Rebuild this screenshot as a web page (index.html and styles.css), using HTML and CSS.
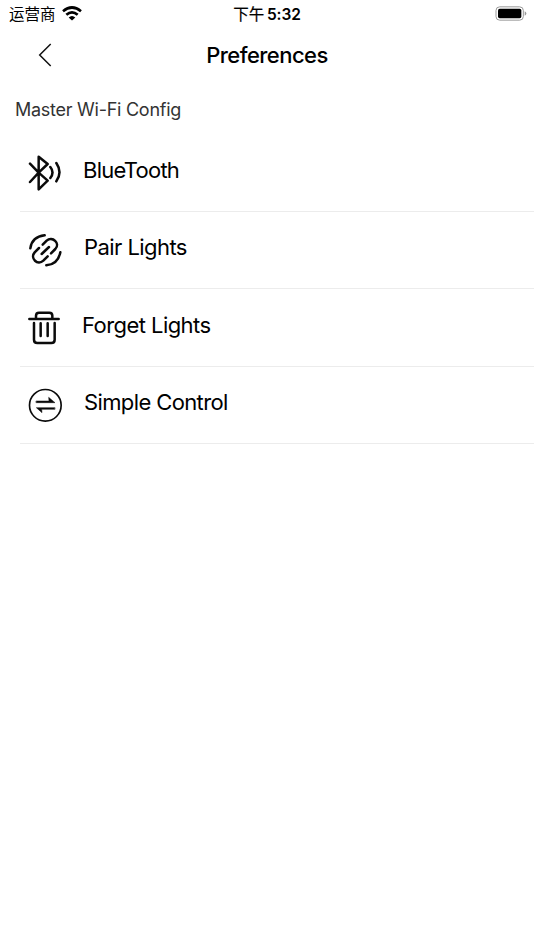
FILE: index.html
```html
<!DOCTYPE html>
<html lang="zh-CN">
<head>
    <meta charset="UTF-8">
    <meta name="viewport" content="width=device-width, initial-scale=1.0">
    <title>Preferences</title>
    <link rel="stylesheet" href="styles.css">
</head>
<body>
    <div class="status-bar">
        <div class="carrier">
            <span>运营商</span>
            <svg class="wifi" viewBox="0 0 60 44">
                <path class="band" d="M3 15 Q30 -7 57 15"/>
                <path class="band" d="M13 26 Q30 11 47 26"/>
                <path d="M20 34 Q30 25 40 34 L30 43 Z"/>
            </svg>
        </div>
        <div class="time"><span class="period">下午</span> 5:32</div>
        <div class="power">
            <svg class="battery" viewBox="0 0 96 44">
                <rect class="case" x="3" y="2" width="82" height="40" rx="11"/>
                <rect x="9" y="8" width="70" height="28" rx="5"/>
                <path class="tip" d="M89 15 Q94 18 94 22 Q94 26 89 29 Z"/>
            </svg>
        </div>
    </div>
    <header class="nav">
        <button class="back" aria-label="Back">
            <svg viewBox="0 0 14 24"><path d="M12.7 1 L1.7 12 L12.7 23"/></svg>
        </button>
        <h1>Preferences</h1>
    </header>
    <h2>Master Wi-Fi Config</h2>
    <ul class="menu">
        <li class="bluetooth">
            <svg class="icon" viewBox="36 46 108 108">
                <path d="M45 72 L71 99 L98 123 L71 149 V51 L98 73 L71 99 L45 127"/>
                <path d="M106 82 Q119 98 106 115 M124 70 Q143 98 124 125"/>
            </svg>
            <span>BlueTooth</span>
        </li>
        <li class="pair">
            <svg class="icon" viewBox="36 36 108 108">
                <path d="M46 85 Q51 50 89 46 M94 136 Q129 133 136 97"/>
                <path d="M83 74 L95 62 C112 47 137 70 121 87 L108 100"/>
                <path d="M72 84 L59 97 C44 115 68 138 85 122 L98 109 M80 102 L102 81"/>
            </svg>
            <span>Pair Lights</span>
        </li>
        <li class="forget">
            <svg class="icon" viewBox="36 36 108 108">
                <path d="M43 63 H131 M63 62 V53 Q63 44 72 44 H103 Q112 44 112 53 V62"/>
                <path d="M57 75 V125 Q57 135 67 135 H109 Q119 135 119 125 V75 M77 76 V114 M98 76 V114"/>
            </svg>
            <span>Forget Lights</span>
        </li>
        <li class="simple">
            <svg class="icon" viewBox="36 36 108 108">
                <circle cx="91" cy="91" r="47.5"/>
                <path class="arrow" d="M64 78 H102 L101 67 L120 83 H64 Z M119 98 H64 L81 113 L80 103 H119 Z"/>
            </svg>
            <span>Simple Control</span>
        </li>
    </ul>
</body>
</html>
```

FILE: styles.css
```css
body {
    font-family: Inter, "Noto Sans CJK SC", sans-serif;
    background: #fff;
    color: #000;
    margin: 0;
}
.status-bar {
    display: grid;
    grid-template-columns: 1fr auto 1fr;
    align-items: center;
    height: 27px;
    padding: 0 7px 0 9px;
    font-size: 15.5px;
    line-height: 29px;
}
.carrier {
    display: flex;
    align-items: center;
    gap: 6px;
}
.wifi {
    width: 20px;
    height: 15px;
    margin-bottom: 2px;
}
.wifi .band {
    fill: none;
    stroke: #000;
    stroke-width: 8;
}
.time {
    margin-right: 2px;
    font-weight: 600;
    font-size: 15.5px;
    letter-spacing: -0.1px;
    word-spacing: -1px;
}
.period {
    font-weight: 400;
    -webkit-text-stroke: 0.2px #000;
}
.power {
    display: flex;
    justify-content: flex-end;
}
.battery {
    width: 32px;
    height: 15px;
    margin-bottom: 2px;
}
.battery .case {
    fill: none;
    stroke: #999;
    stroke-width: 3;
}
.battery .tip {
    fill: #999;
}
.nav {
    display: grid;
    grid-template-columns: 90px 1fr 90px;
    align-items: center;
    height: 56px;
}
.back {
    display: flex;
    padding: 0 0 0 38px;
    border: none;
    background: none;
}
.back svg {
    width: 14px;
    height: 24px;
    fill: none;
    stroke: #111;
    stroke-width: 1.5;
}
h1 {
    margin: 0;
    font-size: 22px;
    font-weight: 500;
    letter-spacing: -0.54px;
    text-align: center;
}
h2 {
    margin: 0;
    padding-left: 15px;
    height: 51px;
    font-size: 18px;
    font-weight: 400;
    line-height: 53px;
    letter-spacing: -0.26px;
    color: #333;
}
.menu {
    list-style: none;
    margin: 0;
    padding: 0.5px 0 0 20px;
}
.menu li {
    display: flex;
    box-sizing: border-box;
    height: 77.4px;
    padding: 20.5px 0 0 7px;
    border-bottom: 1px solid #ececec;
}
.icon {
    width: 36px;
    height: 36px;
    fill: none;
    stroke: #0b0b0b;
    stroke-width: 7.5;
    stroke-linecap: round;
    stroke-linejoin: round;
}
.menu span {
    margin-left: 20px;
    font-size: 22px;
    line-height: 30px;
    letter-spacing: -0.56px;
}
.menu .bluetooth span {
    letter-spacing: -0.76px;
}
.menu .pair span,
.menu .simple span {
    margin-left: 21px;
}
.menu .simple span {
    letter-spacing: -0.62px;
}
.menu .forget span {
    margin-left: 19px;
}
.simple .icon {
    stroke-width: 5;
}
.simple .arrow {
    fill: #0b0b0b;
    stroke-width: 1.5;
}
```
